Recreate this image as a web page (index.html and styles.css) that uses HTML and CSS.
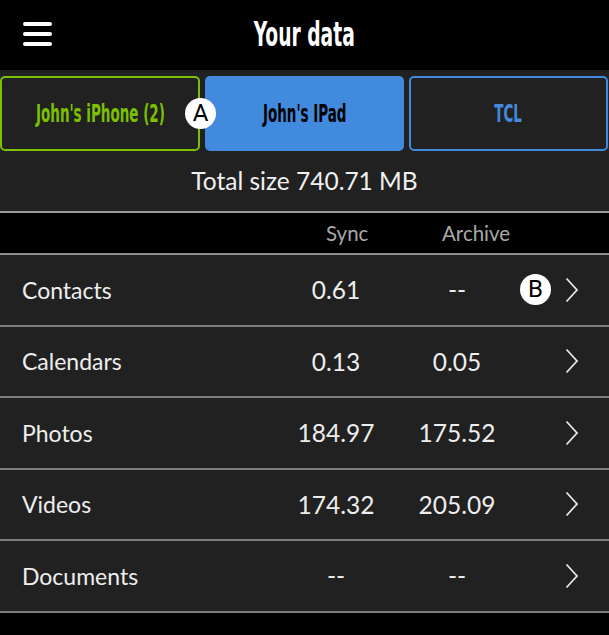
FILE: index.html
```html
<!DOCTYPE html>
<html>
<head>
<meta charset="utf-8">
<link rel="stylesheet" href="styles.css">
</head>
<body>
<div class="app">
  <header class="topbar">
    <div class="menu">
      <span class="bar"></span><span class="bar"></span><span class="bar"></span>
    </div>
    <h1 class="title"><span class="squeeze">Your data</span></h1>
    <div></div>
  </header>
  <section class="devices">
    <div class="tabs">
      <div class="tab tab-green"><span class="squeeze">John's iPhone (2)</span></div>
      <div class="tab tab-active"><span class="squeeze">John's IPad</span></div>
      <div class="tab tab-blue"><span class="squeeze">TCL</span></div>
      <span class="badge badge-a">A</span>
    </div>
    <div class="total">Total size 740.71 MB</div>
  </section>
  <div class="colhead">
    <span></span>
    <span class="h-sync">Sync</span>
    <span class="h-archive">Archive</span>
    <span></span>
  </div>
  <ul class="list">
    <li class="row">
      <span class="name">Contacts</span><span class="val">0.61</span><span class="val">--</span>
      <span class="go"><svg width="14" height="26" viewBox="0 0 14 26"><path d="M1.5 1.5 L12 13 L1.5 24.5" fill="none" stroke="#e6e6e6" stroke-width="1.8"/></svg></span>
      <span class="badge badge-b">B</span>
    </li>
    <li class="row">
      <span class="name">Calendars</span><span class="val">0.13</span><span class="val">0.05</span>
      <span class="go"><svg width="14" height="26" viewBox="0 0 14 26"><path d="M1.5 1.5 L12 13 L1.5 24.5" fill="none" stroke="#e6e6e6" stroke-width="1.8"/></svg></span>
    </li>
    <li class="row">
      <span class="name">Photos</span><span class="val">184.97</span><span class="val">175.52</span>
      <span class="go"><svg width="14" height="26" viewBox="0 0 14 26"><path d="M1.5 1.5 L12 13 L1.5 24.5" fill="none" stroke="#e6e6e6" stroke-width="1.8"/></svg></span>
    </li>
    <li class="row">
      <span class="name">Videos</span><span class="val">174.32</span><span class="val">205.09</span>
      <span class="go"><svg width="14" height="26" viewBox="0 0 14 26"><path d="M1.5 1.5 L12 13 L1.5 24.5" fill="none" stroke="#e6e6e6" stroke-width="1.8"/></svg></span>
    </li>
    <li class="row">
      <span class="name">Documents</span><span class="val">--</span><span class="val">--</span>
      <span class="go"><svg width="14" height="26" viewBox="0 0 14 26"><path d="M1.5 1.5 L12 13 L1.5 24.5" fill="none" stroke="#e6e6e6" stroke-width="1.8"/></svg></span>
    </li>
  </ul>
</div>
</body>
</html>
```

FILE: styles.css
```css
html, body {
  margin: 0;
  padding: 0;
  background: #000;
}
body {
  font-family: "Lato", "Noto Sans", sans-serif;
  color: #eeeeee;
  width: 609px;
  height: 635px;
  overflow: hidden;
}
.topbar {
  height: 70px;
  background: #000;
  display: grid;
  grid-template-columns: 1fr auto 1fr;
  align-items: center;
}
.menu {
  padding-left: 23px;
  display: flex;
  flex-direction: column;
  gap: 6px;
  margin-top: -2px;
}
.bar {
  display: block;
  width: 29px;
  height: 4px;
  border-radius: 2px;
  background: #fff;
}
.title {
  margin: 0;
  font-family: "Liberation Sans Narrow", "DejaVu Sans Condensed", sans-serif;
  font-weight: bold;
  font-size: 33px;
  color: #fff;
  line-height: 1;
  margin-top: -2px;
}
.title .squeeze {
  transform: scaleX(0.63);
}
.squeeze {
  display: inline-block;
  white-space: nowrap;
}
.devices {
  background: #212121;
  padding-top: 6px;
}
.tabs {
  position: relative;
  display: grid;
  grid-template-columns: 200px 199px 199px;
  gap: 5px;
  height: 75px;
}
.tab {
  box-sizing: border-box;
  border-radius: 5px;
  display: flex;
  align-items: center;
  justify-content: center;
  font-family: "Liberation Sans Narrow", "DejaVu Sans Condensed", sans-serif;
  font-weight: bold;
  font-size: 25px;
}
.tab .squeeze {
  transform: scaleX(0.6);
}
.tab-green {
  border: 2px solid #7cc000;
  color: #7cc000;
}
.tab-active {
  background: #428ade;
  color: #000;
}
.tab-blue {
  border: 2px solid #428ade;
  color: #428ade;
}
.badge {
  position: absolute;
  width: 31px;
  height: 31px;
  border-radius: 50%;
  background: #fff;
  color: #000;
  font-family: "Roboto", "Liberation Sans", sans-serif;
  font-size: 24px;
  line-height: 31px;
  text-align: center;
}
.badge-a {
  left: 185px;
  top: 22px;
}
.total {
  height: 60px;
  line-height: 60px;
  text-align: center;
  font-size: 24.5px;
  color: #f0f0f0;
  border-bottom: 2px solid #9a9a9a;
}
.colhead {
  display: grid;
  grid-template-columns: 1fr 120px 122px 91px;
  padding-left: 22px;
  height: 40px;
  align-items: center;
  background: #000;
  color: #a8a8a8;
  font-size: 20.5px;
  border-bottom: 2px solid #8e8e8e;
}
.h-sync {
  padding-left: 50px;
}
.h-archive {
  padding-left: 46px;
}
.list {
  list-style: none;
  margin: 0;
  padding: 0;
}
.row {
  position: relative;
  display: grid;
  grid-template-columns: 1fr 120px 122px 91px;
  padding-left: 22px;
  height: 69.5px;
  align-items: center;
  background: #212121;
  border-bottom: 2px solid #7d7d7d;
  font-size: 23px;
}
.val {
  text-align: center;
  font-size: 24.5px;
}
.go {
  padding-left: 47px;
  display: flex;
  align-items: center;
}
.badge-b {
  left: 520px;
  top: 19px;
}
```
